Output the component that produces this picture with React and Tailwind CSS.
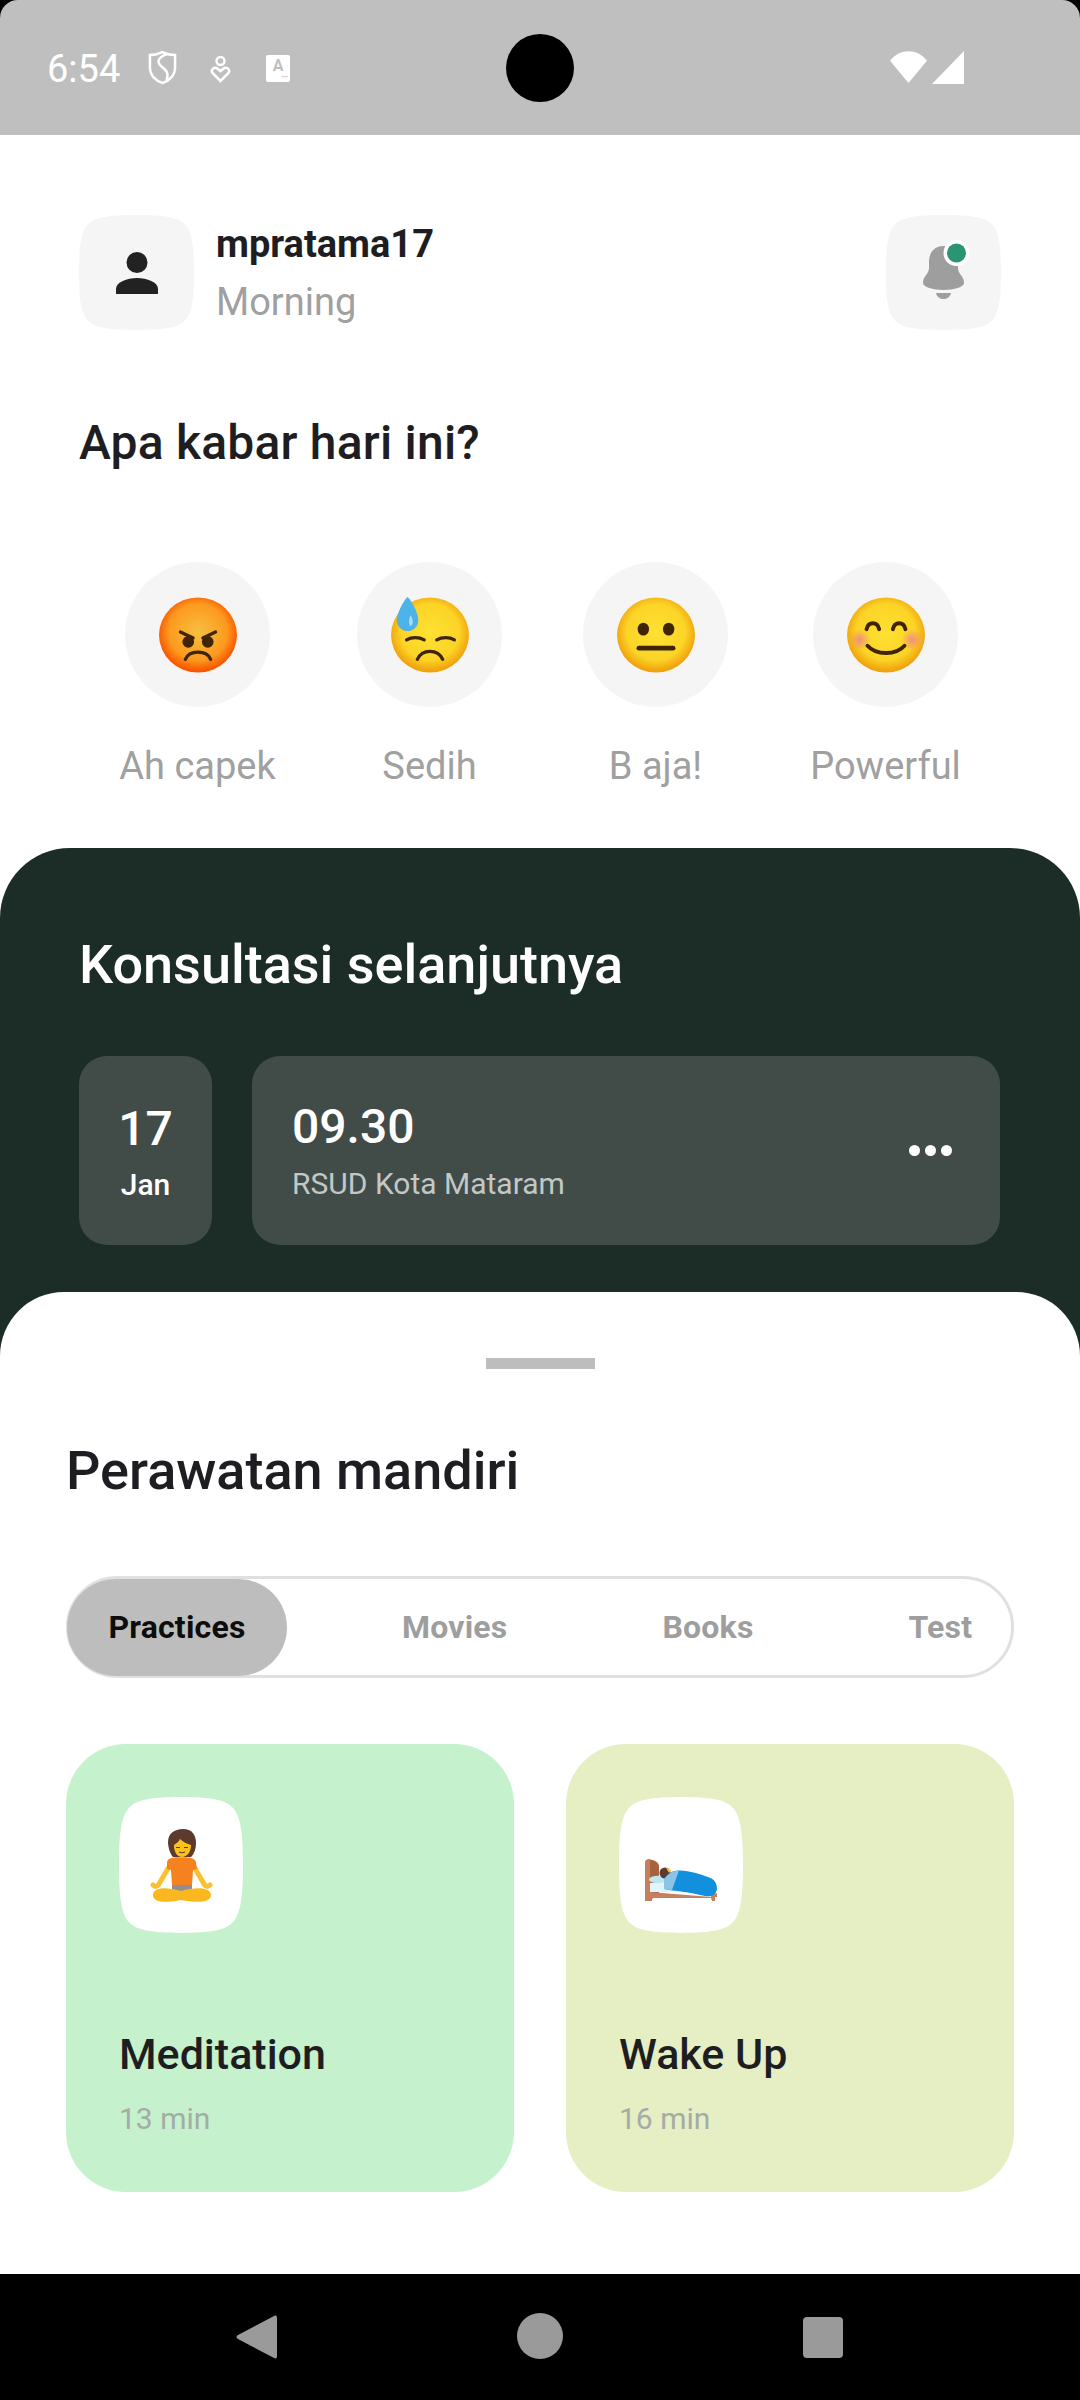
const font = "font-['Roboto',sans-serif]";

function Squircle({ className, fill = "#f5f5f5", children }) {
  return (
    <div className={`relative flex items-center justify-center ${className}`}>
      <svg className="absolute inset-0 w-full h-full" viewBox="0 0 100 100" preserveAspectRatio="none">
        <path d="M50 0C74 0 86 2 92 8C98 14 100 26 100 50C100 74 98 86 92 92C86 98 74 100 50 100C26 100 14 98 8 92C2 86 0 74 0 50C0 26 2 14 8 8C14 2 26 0 50 0Z" fill={fill} />
      </svg>
      <div className="relative">{children}</div>
    </div>
  );
}

function FaceDefs({ id, inner, outer, edge }) {
  return (
    <radialGradient id={id} cx="50%" cy="46%" r="52%">
      <stop offset="0%" stopColor={inner} />
      <stop offset="72%" stopColor={outer} />
      <stop offset="100%" stopColor={edge} />
    </radialGradient>
  );
}

function AngryFace() {
  return (
    <svg width="78" height="76" viewBox="0 0 80 78" className="block">
      <defs><FaceDefs id="angry" inner="#f6c040" outer="#fc9a1e" edge="#fa5500" /></defs>
      <ellipse cx="40" cy="39" rx="40" ry="38.5" fill="url(#angry)" />
      <path d="M22 36L35 42M58 36L45 42" stroke="#3f2505" strokeWidth="3.4" strokeLinecap="round" />
      <circle cx="30" cy="46" r="6" fill="#3f2505" />
      <circle cx="50" cy="46" r="6" fill="#3f2505" />
      <path d="M27 64C31 54 49 54 53 64" stroke="#3f2505" strokeWidth="3.4" fill="none" strokeLinecap="round" />
    </svg>
  );
}

function SadFace() {
  return (
    <svg width="78" height="76" viewBox="0 0 80 78" className="block">
      <defs><FaceDefs id="sad" inner="#fee133" outer="#fbd426" edge="#f1a20d" /></defs>
      <ellipse cx="40" cy="39" rx="40" ry="38.5" fill="url(#sad)" />
      <path d="M16 44C21 41 29 41 34 44M47 44C52 41 60 41 65 44" stroke="#3f2505" strokeWidth="3.4" fill="none" strokeLinecap="round" />
      <path d="M27 64C32 53 48 53 53 64" stroke="#3f2505" strokeWidth="3.4" fill="none" strokeLinecap="round" />
      <path d="M17 0C20 2 28 16 28 24C28 30 23 35 17 35C11 35 6 30 6 24C6 16 14 2 17 0Z" fill="#4db3e8" />
      <path d="M20 19C23 22 23 29 20 30C18 28 18 22 20 19Z" fill="#a8def6" />
    </svg>
  );
}

function NeutralFace() {
  return (
    <svg width="78" height="76" viewBox="0 0 80 78" className="block">
      <defs><FaceDefs id="neutral" inner="#fee133" outer="#fbd426" edge="#f1a20d" /></defs>
      <ellipse cx="40" cy="39" rx="40" ry="38.5" fill="url(#neutral)" />
      <ellipse cx="27" cy="33" rx="5.8" ry="6.6" fill="#3f2505" />
      <ellipse cx="53" cy="33" rx="5.8" ry="6.6" fill="#3f2505" />
      <rect x="20" y="50" width="40" height="5" rx="2.5" fill="#3f2505" />
    </svg>
  );
}

function SmileFace() {
  return (
    <svg width="78" height="76" viewBox="0 0 80 78" className="block">
      <defs>
        <FaceDefs id="smile" inner="#fee133" outer="#fbd426" edge="#f1a20d" />
        <radialGradient id="blush">
          <stop offset="0%" stopColor="#f28b82" stopOpacity="0.95" />
          <stop offset="100%" stopColor="#f28b82" stopOpacity="0" />
        </radialGradient>
      </defs>
      <ellipse cx="40" cy="39" rx="40" ry="38.5" fill="url(#smile)" />
      <circle cx="13" cy="44" r="11" fill="url(#blush)" />
      <circle cx="67" cy="44" r="11" fill="url(#blush)" />
      <path d="M20 33C22 25 31 25 33 33M47 33C49 25 58 25 60 33" stroke="#3f2505" strokeWidth="4" fill="none" strokeLinecap="round" />
      <path d="M21 50C30 60 50 60 59 50" stroke="#3f2505" strokeWidth="4" fill="none" strokeLinecap="round" />
    </svg>
  );
}

function MeditationEmoji() {
  return (
    <svg width="63" height="73" viewBox="0 0 63 73" className="block">
      <path d="M20 36L9 55C7 58 5 58 3 56" stroke="#fbc02d" strokeWidth="5" fill="none" strokeLinecap="round" />
      <path d="M43 36L54 55C56 58 58 58 60 56" stroke="#fbc02d" strokeWidth="5" fill="none" strokeLinecap="round" />
      <rect x="22" y="54" width="20" height="8" fill="#8f8f8f" />
      <path d="M17 34C17 30 21 28 31 28C41 28 46 30 46 34L47 40L43 41L42 56H22L21 41L17 40Z" fill="#f5811f" />
      <path d="M3 66C3 59 14 57 31 62C48 57 61 59 61 66C61 74 46 74 31 71C16 74 3 74 3 66Z" fill="#fbb81e" />
      <rect x="27" y="23" width="9" height="6" fill="#f5b312" />
      <path d="M18 13C18 5 24 0 33 0C42 0 46 6 46 14C46 20 44 25 41 28H23C20 25 18 18 18 13Z" fill="#5d3a2e" />
      <path d="M24 16C26 14 29 13 30 10C33 13 37 15 41 16C41 23 37 28 32 28C27 28 24 23 24 16Z" fill="#fcc21b" />
      <path d="M26 18.5H30M34 18.5H38M29 23C31 24 33 24 35 23" stroke="#5d3a2e" strokeWidth="1.1" fill="none" />
    </svg>
  );
}

function BedEmoji() {
  return (
    <svg width="72" height="42" viewBox="0 0 72 42" className="block">
      <path d="M0 3C0 1 2 0 4 0C10 1 14 3 14 8V37H7V42H0Z" fill="#c57f5f" />
      <path d="M5 1C10 2 14 4 14 8V37H5Z" fill="#a9623e" />
      <path d="M5 33L66 38V36L72 34V38H70V42H67L66 39H8L6 42H5Z" fill="#c57f5f" />
      <rect x="5" y="24" width="30" height="9" fill="#e0f5fa" />
      <ellipse cx="13" cy="20.5" rx="9" ry="3.8" fill="#bfe5f0" />
      <circle cx="20" cy="14" r="5.5" fill="#5d3a2e" />
      <path d="M21 9L26 11L24 14Z" fill="#fcc21b" />
      <path d="M19 20C23 14 28 11 35 11.5C45 12 55 15 63 18C70 20 72 25 72 30C71 36 67 38 60 37C44 33 30 32 19 30Z" fill="#1290dd" />
      <path d="M19 20C23 15 27 12 34 11.5L27 31L19 30Z" fill="#8cc4e8" />
    </svg>
  );
}

function Mood({ face, label, className }) {
  return (
    <div className={`flex flex-col items-center w-[145px] ${className}`}>
      <div className="w-[145px] h-[145px] rounded-full bg-[#f5f5f5] flex items-center justify-center">{face}</div>
      <span className="mt-[37px] text-[38px] leading-[44px] text-[#a0a0a0] whitespace-nowrap">{label}</span>
    </div>
  );
}

function Activity({ bg, icon, title, time }) {
  return (
    <div className={`w-[448px] h-[448px] rounded-[60px] px-[53px] pt-[53px] ${bg}`}>
      <Squircle className="w-[124px] h-[136px]" fill="#ffffff">{icon}</Squircle>
      <p className="mt-[97px] text-[43px] leading-[48px] font-medium text-[#1e1e22]">{title}</p>
      <p className="mt-[24px] text-[30px] leading-[34px] text-[#a3aca6]">{time}</p>
    </div>
  );
}

export default function App() {
  return (
    <div className={`w-[1080px] h-[2400px] overflow-hidden bg-white flex flex-col ${font}`}>
      {/* Status bar */}
      <div className="h-[135px] bg-black shrink-0">
        <div className="relative h-full bg-[#bfbfbf] rounded-t-[18px] pl-[47px] pr-[116px] flex items-center justify-between">
          <div className="flex items-center text-white mt-[2px]">
            <span className="text-[38px] leading-none w-[101px]">6:54</span>
            <svg width="29" height="35" viewBox="0 0 30 36" className="-mt-[2px]">
              <path d="M15 2C19 4 23 5 28 5V18C28 26 22 32 15 34C8 32 2 26 2 18V5C7 5 11 4 15 2Z" fill="none" stroke="#fff" strokeWidth="2.6" />
              <path d="M20 4C11 7 8 12 14 17C19 21 22 24 19 31" fill="none" stroke="#fff" strokeWidth="2.6" />
            </svg>
            <svg width="21" height="28" viewBox="0 0 20 28" className="ml-[33px]">
              <circle cx="10" cy="6" r="4" fill="none" stroke="#fff" strokeWidth="2.4" />
              <path d="M10 26L2 18C0 15 3 12 6 13L10 16L14 13C17 12 20 15 18 18Z" fill="none" stroke="#fff" strokeWidth="2.6" />
            </svg>
            <div className="ml-[35px] w-[24px] h-[27px] bg-white rounded-[2px] flex flex-col items-center">
              <span className="text-[16px] leading-[17px] font-bold text-[#bfbfbf] mt-[2px]">A</span>
              <span className="text-[6px] leading-[6px] font-bold text-[#bfbfbf] self-end mr-[2px]">•••</span>
            </div>
          </div>
          <div className="absolute left-[506px] top-[34px] w-[68px] h-[68px] rounded-full bg-black" />
          <div className="flex items-end gap-[4px]">
            <svg width="39" height="33" viewBox="0 0 38 34"><path d="M0 10C10 -3 28 -3 38 10L19 33Z" fill="#fff" /></svg>
            <svg width="32" height="33" viewBox="0 0 32 33"><path d="M32 0V33H0Z" fill="#fff" /></svg>
          </div>
        </div>
      </div>

      {/* Header */}
      <div className="px-[79px] pt-[80px] flex items-center justify-between">
        <div className="flex items-center gap-[22px]">
          <Squircle className="w-[115px] h-[115px]">
            <svg width="42" height="42" viewBox="0 0 42 42" className="block">
              <circle cx="21" cy="10.5" r="10.5" fill="#222" />
              <path d="M0 42V37C0 30 11 26 21 26C31 26 42 30 42 37V42Z" fill="#222" />
            </svg>
          </Squircle>
          <div>
            <p className="text-[38px] leading-[44px] font-bold text-[#1e1e22]">mpratama17</p>
            <p className="mt-[14px] text-[38px] leading-[44px] text-[#a0a0a0]">Morning</p>
          </div>
        </div>
        <Squircle className="w-[115px] h-[115px]">
          <svg width="41" height="53" viewBox="0 0 41 53" className="block overflow-visible">
            <path d="M20.5 0C10 0 6 8 6 16V22C6 28 0 30 0 37C0 41 10 44 20.5 44C31 44 41 41 41 37C41 30 35 28 35 22V16C35 8 31 0 20.5 0Z" fill="#9e9e9e" />
            <path d="M13 47H28C27 51 24 53 20.5 53C17 53 14 51 13 47Z" fill="#9e9e9e" />
            <circle cx="33.5" cy="7" r="13" fill="#fff" />
            <circle cx="33.5" cy="7" r="9.5" fill="#2a9473" />
          </svg>
        </Squircle>
      </div>

      <h1 className="px-[79px] mt-[85px] text-[48px] leading-[56px] font-medium text-[#1e1e22] tracking-[0.2px]">Apa kabar hari ini?</h1>

      {/* Moods */}
      <div className="mt-[91px] h-[286px] shrink-0 flex pl-[125px]">
        <Mood face={<AngryFace />} label="Ah capek" />
        <Mood face={<SadFace />} label="Sedih" className="ml-[87px]" />
        <Mood face={<NeutralFace />} label="B aja!" className="ml-[81px]" />
        <Mood face={<SmileFace />} label="Powerful" className="ml-[85px]" />
      </div>

      {/* Next consultation */}
      <div className="h-[530px] shrink-0 bg-[#1c2d28] rounded-t-[70px] px-[79px] pt-[87px]">
        <h2 className="text-[54px] leading-[60px] font-medium text-white">Konsultasi selanjutnya</h2>
        <div className="mt-[61px] flex gap-[40px]">
          <div className="w-[133px] h-[189px] rounded-[28px] bg-[#414c49] flex flex-col items-center pt-[46px]">
            <span className="text-[48px] leading-[54px] font-medium text-white">17</span>
            <span className="mt-[12px] text-[30px] leading-[34px] font-medium text-white">Jan</span>
          </div>
          <div className="w-[748px] h-[189px] rounded-[28px] bg-[#414c49] pl-[40px] pr-[48px] flex items-center justify-between">
            <div>
              <p className="text-[48px] leading-[54px] font-medium text-white">09.30</p>
              <p className="mt-[13px] text-[30px] leading-[34px] text-[#c3c8c6]">RSUD Kota Mataram</p>
            </div>
            <div className="flex gap-[5px]">
              <span className="w-[11px] h-[11px] rounded-full bg-white" />
              <span className="w-[11px] h-[11px] rounded-full bg-white" />
              <span className="w-[11px] h-[11px] rounded-full bg-white" />
            </div>
          </div>
        </div>
      </div>

      {/* Bottom sheet */}
      <div className="-mt-[86px] relative flex-1 bg-white rounded-t-[64px] px-[66px] pt-[149px]">
        <div className="absolute left-[486px] top-[66px] w-[109px] h-[11px] bg-[#bdbdbd]" />
        <h2 className="text-[54px] leading-[60px] font-medium text-[#1e1e22]">Perawatan mandiri</h2>
        <div className="mt-[75px] h-[102px] w-[948px] rounded-full border-[3px] border-[#e0e0e0] flex items-center text-[32px] font-bold text-[#9e9e9e] tracking-[0.2px]">
          <div className="-ml-[2px] w-[220px] h-[97px] rounded-full bg-[#bdbdbd] text-[#0d0d0d] flex items-center justify-center">Practices</div>
          <span className="ml-[115px]">Movies</span>
          <span className="ml-[155px]">Books</span>
          <span className="ml-[155px]">Test</span>
        </div>
        <div className="mt-[66px] flex gap-[52px]">
          <Activity bg="bg-[#c5f1cd]" icon={<MeditationEmoji />} title="Meditation" time="13 min" />
          <Activity bg="bg-[#e6eec4]" icon={<div className="mt-[30px]"><BedEmoji /></div>} title="Wake Up" time="16 min" />
        </div>
      </div>

      {/* Nav bar */}
      <div className="h-[126px] shrink-0 bg-black relative">
        <svg width="42" height="46" viewBox="0 0 42 46" className="absolute left-[236px] top-[40px]">
          <path d="M38 2C40 1 41 2 41 4V42C41 44 40 45 38 44L2 25C0 24 0 22 2 21Z" fill="#9a9a9a" />
        </svg>
        <div className="absolute left-[517px] top-[39px] w-[46px] h-[46px] rounded-full bg-[#9a9a9a]" />
        <div className="absolute left-[803px] top-[43px] w-[40px] h-[41px] rounded-[4px] bg-[#9a9a9a]" />
      </div>
    </div>
  );
}
